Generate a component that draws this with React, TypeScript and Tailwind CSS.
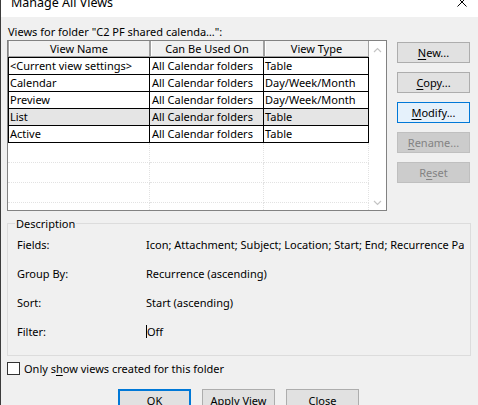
import type { ReactNode } from "react";

const VIEWS = [
  ["<Current view settings>", "All Calendar folders", "Table"],
  ["Calendar", "All Calendar folders", "Day/Week/Month"],
  ["Preview", "All Calendar folders", "Day/Week/Month"],
  ["List", "All Calendar folders", "Table"],
  ["Active", "All Calendar folders", "Table"],
];

const SELECTED = 3;

const DETAILS = [
  ["Fields:", "Icon; Attachment; Subject; Location; Start; End; Recurrence Pattern"],
  ["Group By:", "Recurrence (ascending)"],
  ["Sort:", "Start (ascending)"],
];

function Key({ children }: { children: ReactNode }) {
  return <span className="underline underline-offset-2 decoration-1">{children}</span>;
}

function Chevron({ down }: { down?: boolean }) {
  return (
    <svg width="9" height="6" viewBox="0 0 9 6" className={down ? "rotate-180" : ""}>
      <path d="M1 5 L4.5 1.5 L8 5" fill="none" stroke="#c4c4c4" strokeWidth="1.2" />
    </svg>
  );
}

function SideButton({ children, kind }: { children: ReactNode; kind?: "focus" | "disabled" }) {
  let cls = "border-[#adadad] bg-[#e1e1e1] text-black";
  if (kind === "focus") cls = "border-[#0078d7] bg-[#e5f1fb] text-black";
  if (kind === "disabled") cls = "border-[#bfbfbf] bg-[#cccccc] text-[#838383]";
  return (
    <button className={"h-[21px] w-[73px] border flex items-center justify-center leading-[17px] " + cls}>
      {children}
    </button>
  );
}

function ViewList() {
  return (
    <div className="w-[380px] h-[171px] border border-[#828282] bg-white flex">
      <div className="w-[361px] flex flex-col">
        {/* column headers */}
        <div className="flex h-[16px]">
          <div className="w-[142px] border border-t-0 border-[#a0a0a0] bg-[#f0f0f0] shadow-[inset_1px_0_0_#ffffff] flex items-center justify-center leading-[14px]">
            View Name
          </div>
          <div className="w-[114px] border border-t-0 border-[#a0a0a0] bg-[#f0f0f0] shadow-[inset_1px_0_0_#ffffff] flex items-center justify-center leading-[14px]">
            Can Be Used On
          </div>
          <div className="w-[105px] border border-t-0 border-[#a0a0a0] bg-[#f0f0f0] shadow-[inset_1px_0_0_#ffffff] flex items-center justify-center leading-[14px]">
            View Type
          </div>
        </div>

        <div className="border-t border-black">
          {VIEWS.map((v, i) => (
            <div key={v[0]} className={"flex h-[17px] " + (i === SELECTED ? "bg-[#e5e5e5]" : "")}>
              <div className="w-[142px] border-l border-r border-b border-black pl-[1px] leading-[16px] overflow-hidden whitespace-nowrap">
                {v[0]}
              </div>
              <div className="w-[114px] border-r border-b border-black pl-[2px] leading-[16px] overflow-hidden whitespace-nowrap">
                {v[1]}
              </div>
              <div className="w-[105px] border-r border-b border-black pl-[1px] leading-[16px] overflow-hidden whitespace-nowrap">
                {v[2]}
              </div>
            </div>
          ))}
        </div>

        {/* empty grid area */}
        <div className="flex-1 flex flex-col">
          {[0, 1, 2].map((r) => (
            <div key={r} className="flex h-[20px]">
              <div className="w-[142px] border-r border-b border-dotted border-[#e2e2e2]" />
              <div className="w-[114px] border-r border-b border-dotted border-[#e2e2e2]" />
              <div className="w-[105px] border-r border-b border-dotted border-[#e2e2e2]" />
            </div>
          ))}
          <div className="flex flex-1">
            <div className="w-[142px] border-r border-dotted border-[#e2e2e2]" />
            <div className="w-[114px] border-r border-dotted border-[#e2e2e2]" />
            <div className="w-[105px] border-r border-dotted border-[#e2e2e2]" />
          </div>
        </div>
      </div>

      {/* disabled scrollbar */}
      <div className="w-[17px] flex flex-col items-center justify-between pt-[6px] pb-[4px]">
        <Chevron />
        <Chevron down />
      </div>
    </div>
  );
}

export default function App() {
  return (
    <div className="w-[478px] h-[405px] overflow-hidden bg-[#f0f0f0] border-l border-[#3c3c3c] text-[11px] text-black font-['Noto_Sans',sans-serif]">
      {/* title bar */}
      <div className="h-[17px] bg-white flex overflow-hidden pl-[10px]">
        <div className="text-[12.5px] leading-[15px] -mt-[5px] whitespace-nowrap">Manage All Views</div>
        <svg width="10" height="10" viewBox="0 0 10 10" className="ml-auto mr-[11px] -mt-[3px]">
          <path d="M0.5 0.5 L9.5 9.5 M9.5 0.5 L0.5 9.5" stroke="#000" strokeWidth="1" />
        </svg>
      </div>

      <div className="pl-[6px]">
        <div className="flex">
          <div>
            <div className="mt-[6px] h-[17px] leading-[17px] pl-[1px] whitespace-nowrap">
              Views for folder "C2 PF shared calenda…":
            </div>
            <ViewList />
          </div>
          <div className="ml-[10px] mt-[25px] flex flex-col gap-[9px]">
            <SideButton>
              <Key>N</Key>ew...
            </SideButton>
            <SideButton>
              <Key>C</Key>opy...
            </SideButton>
            <SideButton kind="focus">
              <Key>M</Key>odify...
            </SideButton>
            <SideButton kind="disabled">
              <Key>R</Key>ename...
            </SideButton>
            <SideButton kind="disabled">
              R<Key>e</Key>set
            </SideButton>
          </div>
        </div>

        {/* Description group */}
        <div className="relative mt-[12px] w-[464px] h-[133px] border border-[#dcdcdc] pt-[6px] pl-[9px] pr-[6px]">
          <span className="absolute left-[7px] top-[-9px] px-[1px] leading-[17px] bg-[#f0f0f0]">Description</span>
          {DETAILS.map(([label, value]) => (
            <div key={label} className="flex h-[29px] items-center">
              <div className="w-[129px] shrink-0 leading-[17px]">{label}</div>
              <div className="flex-1 overflow-hidden whitespace-nowrap leading-[17px]">{value}</div>
            </div>
          ))}
          <div className="flex h-[29px] items-center">
            <div className="w-[129px] shrink-0 leading-[17px]">Filter:</div>
            <div className="flex items-center leading-[17px]">
              <span className="inline-block w-px h-[13px] bg-black" />
              Off
            </div>
          </div>
        </div>

        <div className="mt-[6px] flex items-center h-[13px] gap-[4px]">
          <div className="w-[13px] h-[13px] border border-[#333333] bg-white" />
          <span className="leading-[17px]">
            Only s<Key>h</Key>ow views created for this folder
          </span>
        </div>
      </div>

      <div className="mt-[14px] flex gap-[11px] pl-[117px]">
        <button className="h-[23px] w-[73px] border-2 border-[#0078d7] bg-[#e1e1e1] leading-[17px]">OK</button>
        <button className="h-[23px] w-[73px] border border-[#adadad] bg-[#e1e1e1] leading-[17px]">
          <Key>A</Key>pply View
        </button>
        <button className="h-[23px] w-[73px] border border-[#adadad] bg-[#e1e1e1] leading-[17px]">Close</button>
      </div>
    </div>
  );
}
